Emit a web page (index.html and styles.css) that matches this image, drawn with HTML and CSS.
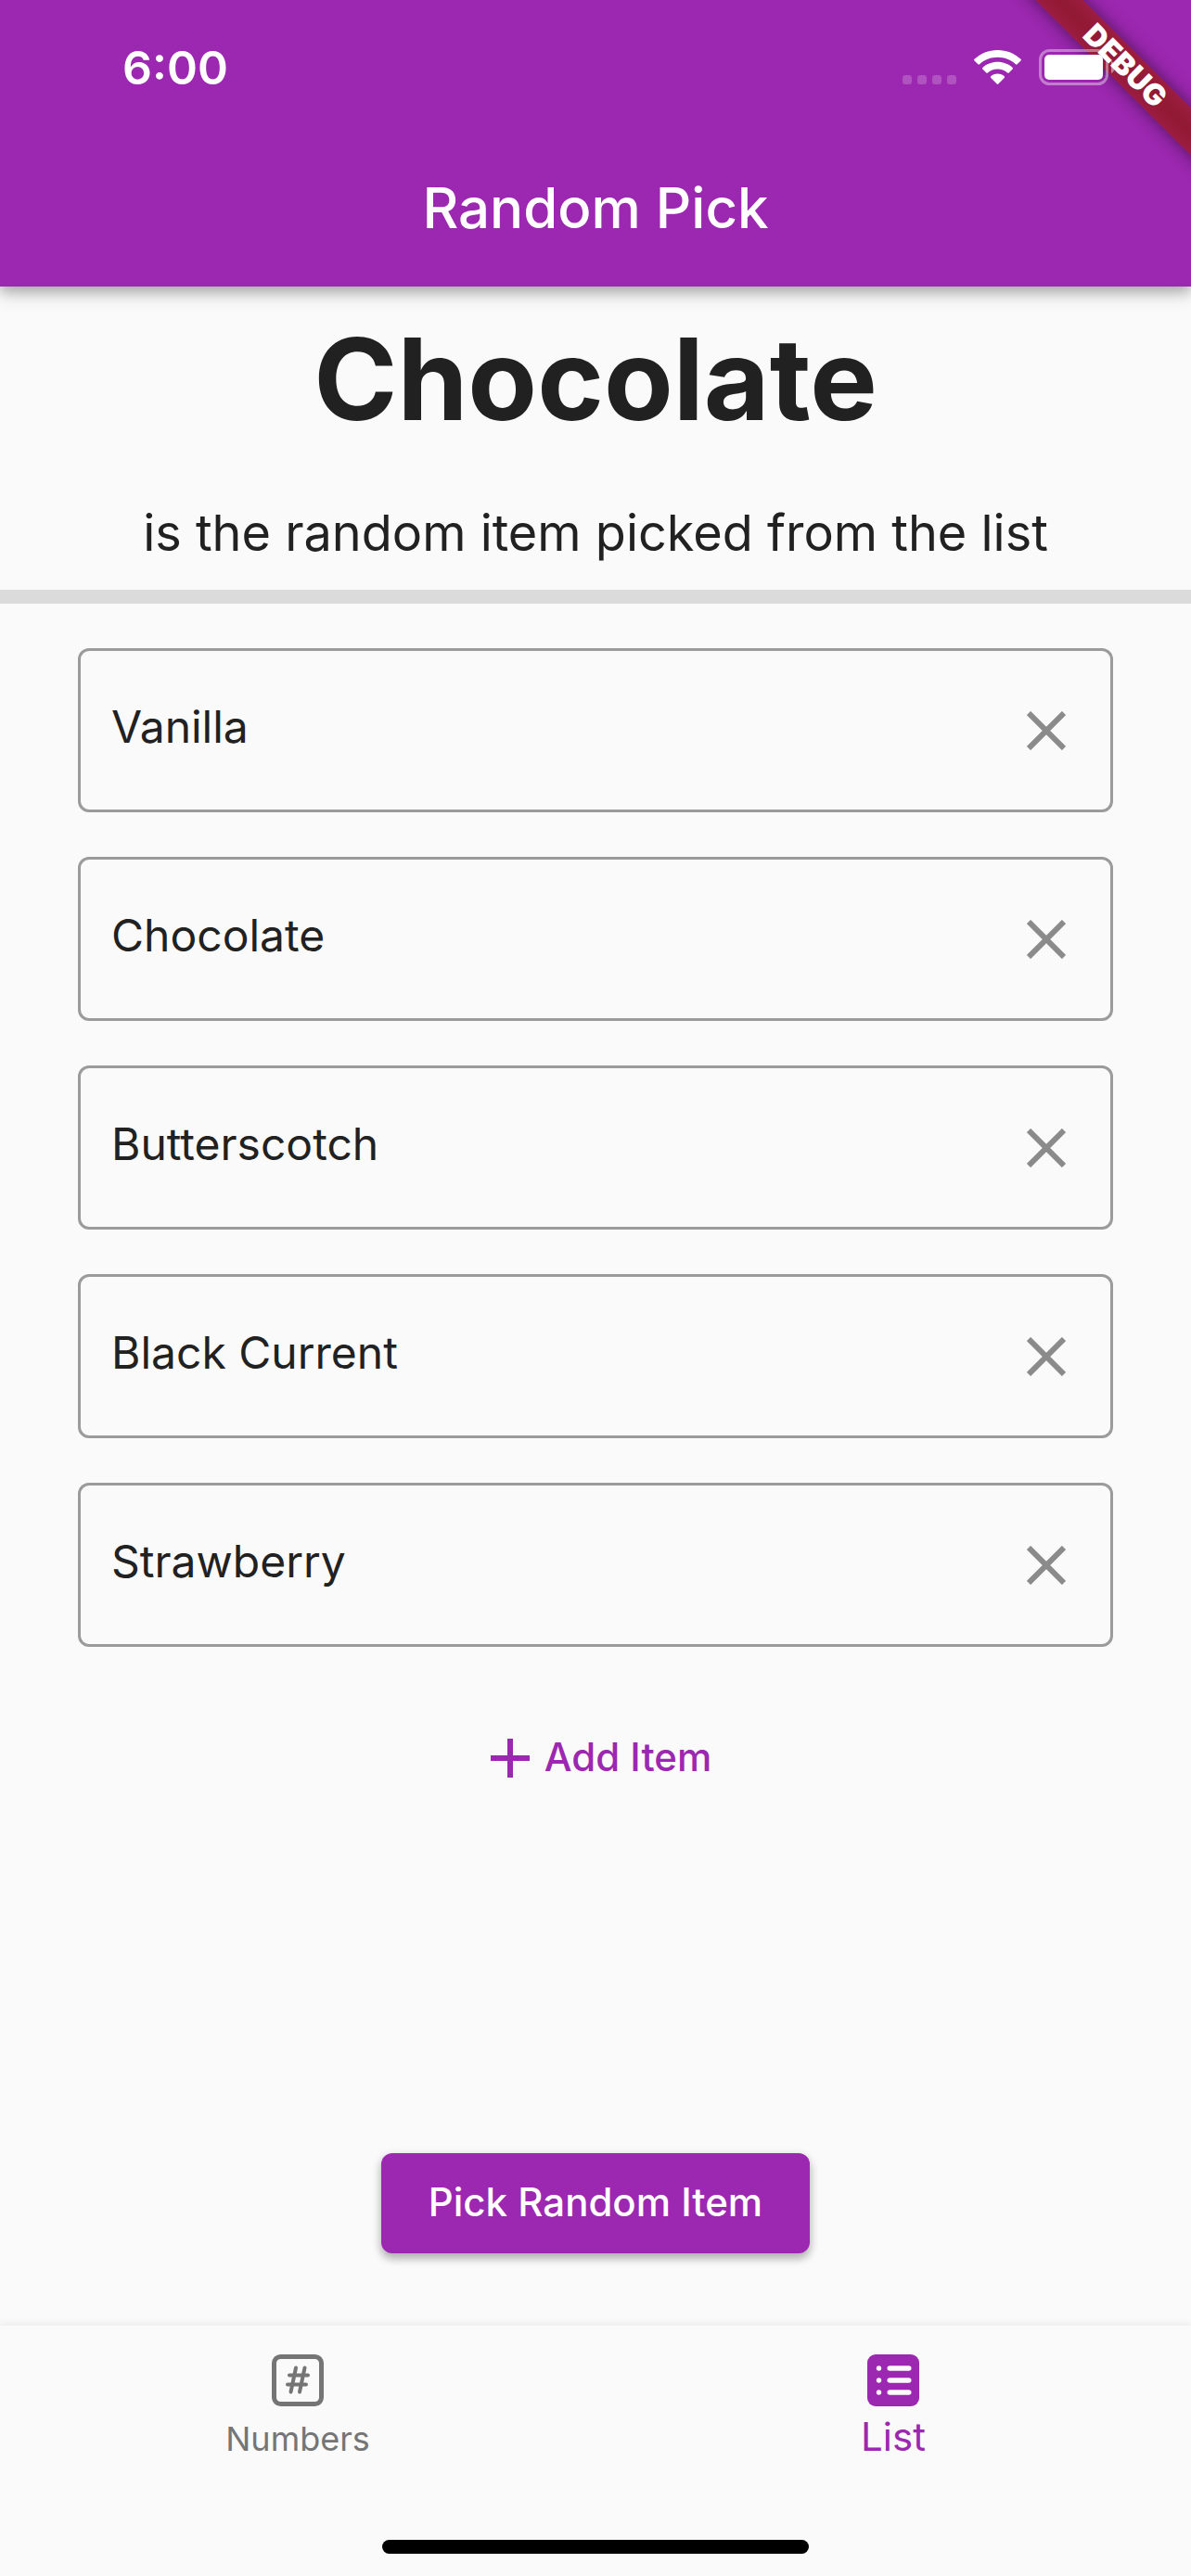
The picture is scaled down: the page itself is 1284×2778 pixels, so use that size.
FILE: index.html
```html
<!DOCTYPE html>
<html lang="en">
<head>
  <meta charset="utf-8">
  <meta name="viewport" content="width=device-width, initial-scale=1">
  <title>Random Pick</title>
  <link rel="stylesheet" href="styles.css">
</head>
<body>
  <header class="app-bar">
    <div class="debug-corner"><span class="debug-banner">DEBUG</span></div>
    <div class="status-bar">
      <time class="clock">6:00</time>
      <div class="indicators">
        <svg class="signal" viewBox="0 0 58 10" aria-hidden="true">
          <rect width="10" height="10" rx="3"/>
          <rect x="16" width="10" height="10" rx="3"/>
          <rect x="32" width="10" height="10" rx="3"/>
          <rect x="48" width="10" height="10" rx="3"/>
        </svg>
        <svg class="wifi" viewBox="0 0 51 38" aria-hidden="true">
          <path d="M25.500 0C35.200 0 44 3.700 50.500 9.800q.8.800 0 1.600L46.600 15.300q-.8.700-1.600 0C39.800 10.500 33 7.800 25.500 7.800S11.200 10.500 6 15.300q-.8.700-1.600 0L.500 11.400q-.8-.8 0-1.600C7 3.700 15.800 0 25.500 0z"/>
          <path d="M25.500 12.800c6.200 0 11.900 2.300 16.200 6.200q.8.800 0 1.600L37.700 24.500q-.8.700-1.600 0c-2.800-2.600-6.600-4.100-10.600-4.100s-7.800 1.500-10.600 4.100q-.8.700-1.600 0L9.300 20.600q-.8-.8 0-1.600c4.300-3.900 10-6.200 16.200-6.200z"/>
          <path d="M25.500 25.600c2.800 0 5.400 1 7.300 2.700q.7.800 0 1.600l-6.500 6.600q-.8.800-1.600 0L18.200 29.900q-.7-.8 0-1.600c1.900-1.700 4.500-2.700 7.300-2.700z"/>
        </svg>
        <svg class="battery" viewBox="0 0 82 39" aria-hidden="true">
          <rect class="battery-shell" x="1.500" y="1.500" width="72" height="36" rx="10"/>
          <rect x="6" y="6" width="63" height="27" rx="5"/>
          <path class="battery-cap" d="M78 13c5 2 5 11 0 13z"/>
        </svg>
      </div>
    </div>
    <h1 class="title">Random Pick</h1>
  </header>

  <main class="content">
    <section class="result">
      <h2 class="picked">Chocolate</h2>
      <p class="caption">is the random item picked from the list</p>
    </section>

    <ul class="items">
      <li class="item">
        <input class="item-text" type="text" value="Vanilla" aria-label="Item 1">
        <button class="remove" type="button" aria-label="Remove Vanilla"><svg viewBox="0 0 42 42"><path d="M2 2l38 38M40 2L2 40"/></svg></button>
      </li>
      <li class="item">
        <input class="item-text" type="text" value="Chocolate" aria-label="Item 2">
        <button class="remove" type="button" aria-label="Remove Chocolate"><svg viewBox="0 0 42 42"><path d="M2 2l38 38M40 2L2 40"/></svg></button>
      </li>
      <li class="item">
        <input class="item-text" type="text" value="Butterscotch" aria-label="Item 3">
        <button class="remove" type="button" aria-label="Remove Butterscotch"><svg viewBox="0 0 42 42"><path d="M2 2l38 38M40 2L2 40"/></svg></button>
      </li>
      <li class="item">
        <input class="item-text" type="text" value="Black Current" aria-label="Item 4">
        <button class="remove" type="button" aria-label="Remove Black Current"><svg viewBox="0 0 42 42"><path d="M2 2l38 38M40 2L2 40"/></svg></button>
      </li>
      <li class="item">
        <input class="item-text" type="text" value="Strawberry" aria-label="Item 5">
        <button class="remove" type="button" aria-label="Remove Strawberry"><svg viewBox="0 0 42 42"><path d="M2 2l38 38M40 2L2 40"/></svg></button>
      </li>
    </ul>

    <button class="add" type="button">
      <svg viewBox="0 0 42 42" aria-hidden="true"><path d="M21 0v42M0 21h42"/></svg>
      <span class="button-label">Add Item</span>
    </button>

    <button class="pick" type="button"><span class="button-label">Pick Random Item</span></button>
  </main>

  <footer class="bottom-bar">
    <nav class="tabs">
      <a class="tab" href="#numbers">
        <svg viewBox="0 0 56 56" aria-hidden="true">
          <rect class="line" x="2.500" y="2.500" width="51" height="51" rx="7"/>
          <path class="hash" d="M26 14.500l-5.500 26M35.500 14.500l-5.500 26M19 22.500h20M17 32.500h20"/>
        </svg>
        <span>Numbers</span>
      </a>
      <a class="tab tab-active" href="#list" aria-current="page">
        <svg viewBox="0 0 56 56" aria-hidden="true">
          <rect class="plate" width="56" height="56" rx="9"/>
          <g class="rows">
            <circle cx="12.500" cy="15" r="2.700"/><rect x="21.500" y="12.200" width="26" height="5.600" rx="2.800"/>
            <circle cx="12.500" cy="28" r="2.700"/><rect x="21.500" y="25.200" width="26" height="5.600" rx="2.800"/>
            <circle cx="12.500" cy="41" r="2.700"/><rect x="21.500" y="38.200" width="26" height="5.600" rx="2.800"/>
          </g>
        </svg>
        <span>List</span>
      </a>
    </nav>
    <div class="home-indicator"></div>
  </footer>
</body>
</html>
```
FILE: styles.css
```css
:root {
  --primary: #9c27b0;
  --surface: #fafafa;
  --text: #212121;
  --muted: #757575;
}

* {
  box-sizing: border-box;
}

body {
  margin: 0;
  min-height: 100vh;
  display: flex;
  flex-direction: column;
  background: var(--surface);
  color: var(--text);
  font-family: Inter, "Liberation Sans", sans-serif;
}

button,
input {
  margin: 0;
  padding: 0;
  border: 0;
  background: none;
  color: inherit;
  font: inherit;
}

svg {
  display: block;
  flex: none;
}

/* App bar */
.app-bar {
  position: relative;
  background: var(--primary);
  color: #fff;
  box-shadow: 0 6px 12px rgba(0, 0, 0, 0.2), 0 8px 20px rgba(0, 0, 0, 0.16);
}

.status-bar {
  position: relative;
  display: flex;
  justify-content: space-between;
  align-items: center;
  height: 145px;
  padding: 0 82px 0 132px;
}

.clock {
  font-size: 50px;
  line-height: 60px;
  font-weight: 600;
}

.indicators {
  display: flex;
  align-items: flex-end;
  gap: 19px;
}

.indicators svg {
  fill: #fff;
}

.signal {
  width: 58px;
  height: 10px;
  margin-bottom: 1px;
  opacity: 0.2;
}

.wifi {
  width: 51px;
  height: 38px;
}

.battery {
  width: 82px;
  height: 39px;
}

.battery .battery-shell {
  fill: none;
  stroke: #fff;
  stroke-width: 3;
  opacity: 0.4;
}

.battery .battery-cap {
  opacity: 0.45;
}

.title {
  margin: 0;
  padding: 43px 0 49px;
  font-size: 60px;
  line-height: 72px;
  font-weight: 500;
  text-align: center;
}

.debug-corner {
  position: absolute;
  top: 0;
  right: 0;
  width: 240px;
  height: 240px;
  overflow: hidden;
}

.debug-banner {
  position: absolute;
  top: 53px;
  right: -109px;
  width: 360px;
  transform: rotate(45deg);
  background: linear-gradient(#9c1c40, #921a35 40%, #921a35 60%, #9c1c40);
  box-shadow: 0 0 18px rgba(0, 0, 0, 0.5);
  font-size: 32px;
  line-height: 36px;
  font-weight: 900;
  text-align: center;
}

/* Result and list */
.content {
  flex: 1;
  display: flex;
  flex-direction: column;
  align-items: center;
}

.result {
  align-self: stretch;
  padding: 28px 0 29px;
  border-bottom: 15px solid #dbdbdb;
  text-align: center;
}

.picked {
  margin: 0;
  font-size: 122px;
  line-height: 144px;
  font-weight: 700;
}

.caption {
  margin: 62px 0 0;
  font-size: 54px;
  line-height: 64px;
}

.items {
  align-self: stretch;
  display: flex;
  flex-direction: column;
  gap: 48px;
  margin: 0;
  padding: 48px 84px;
  list-style: none;
}

.item {
  display: flex;
  align-items: center;
  border: 3px solid #9b9b9b;
  border-radius: 12px;
}

.item-text {
  flex: 1;
  min-width: 0;
  height: 171px;
  padding: 0 0 8px 33px;
  font-size: 48px;
}

.remove {
  display: grid;
  place-items: center;
  width: 138px;
  height: 138px;
}

.remove svg {
  width: 42px;
  height: 42px;
  fill: none;
  stroke: #8b8b8b;
  stroke-width: 6;
}

.add {
  display: flex;
  align-items: center;
  gap: 16px;
  height: 144px;
  padding-left: 12px;
  color: var(--primary);
  font-size: 42px;
  font-weight: 500;
}

.add svg {
  width: 42px;
  height: 42px;
  stroke: currentColor;
  stroke-width: 6;
}

.button-label {
  display: block;
  padding-bottom: 4px;
}

.pick {
  height: 108px;
  margin: auto 0 78px;
  padding: 0 51px;
  border-radius: 12px;
  background: var(--primary);
  box-shadow: 0 6px 10px rgba(0, 0, 0, 0.22), 0 3px 12px rgba(0, 0, 0, 0.14);
  color: #fff;
  font-size: 42px;
  font-weight: 500;
}

/* Bottom navigation */
.bottom-bar {
  padding-bottom: 24px;
  box-shadow: 0 -2px 8px rgba(0, 0, 0, 0.07);
}

.tabs {
  display: grid;
  grid-template-columns: 1fr 1fr;
  padding: 31px 0 86px;
}

.tab {
  display: flex;
  flex-direction: column;
  align-items: center;
  gap: 12px;
  color: var(--muted);
  font-size: 36px;
  line-height: 46px;
  text-decoration: none;
}

.tab-active {
  gap: 8px;
  color: var(--primary);
  font-size: 42px;
  line-height: 50px;
}

.tab svg {
  width: 56px;
  height: 56px;
}

.line,
.hash {
  fill: none;
  stroke: currentColor;
  stroke-width: 5;
}

.hash {
  stroke-width: 4;
  stroke-linecap: round;
}

.plate {
  fill: currentColor;
}

.rows {
  fill: var(--surface);
}

.home-indicator {
  width: 460px;
  height: 15px;
  margin: 0 auto;
  border-radius: 8px;
  background: #000;
}
```
